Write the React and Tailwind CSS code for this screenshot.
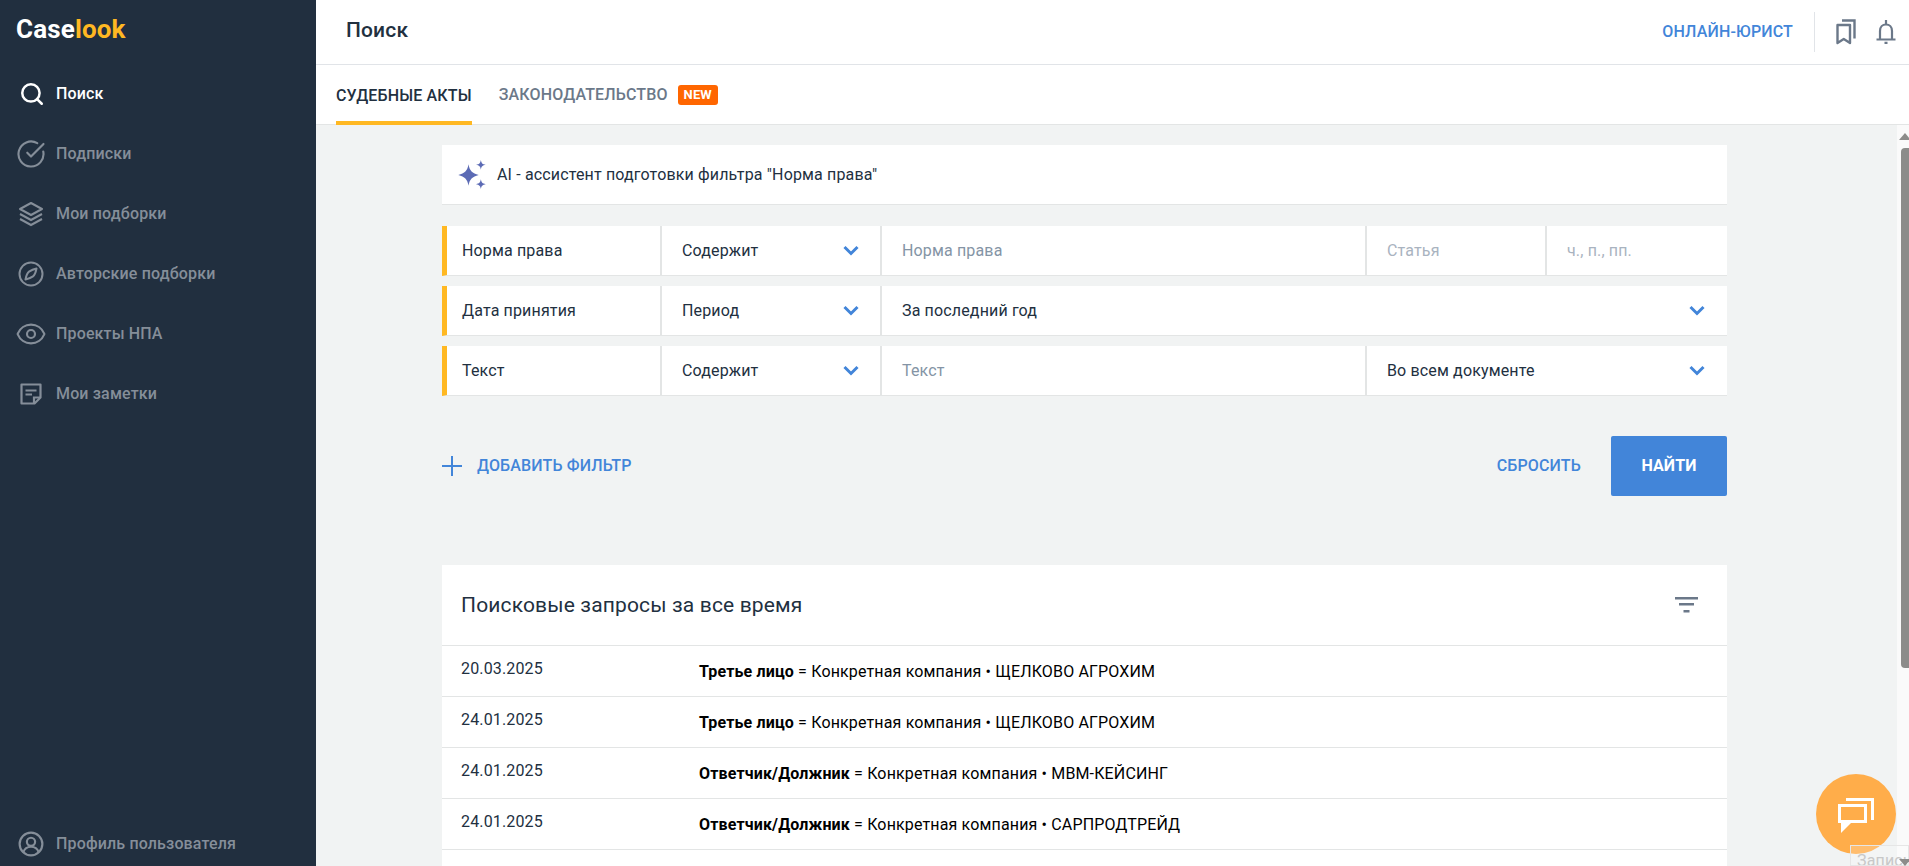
import { Search, CircleCheckBig, Eye } from 'lucide-react';

const navItems = [
    { label: 'Поиск', icon: 'search', active: true },
    { label: 'Подписки', icon: 'check' },
    { label: 'Мои подборки', icon: 'layers' },
    { label: 'Авторские подборки', icon: 'compass' },
    { label: 'Проекты НПА', icon: 'eye' },
    { label: 'Мои заметки', icon: 'note' },
];

const history = [
    { date: '20.03.2025', field: 'Третье лицо', value: 'ЩЕЛКОВО АГРОХИМ' },
    { date: '24.01.2025', field: 'Третье лицо', value: 'ЩЕЛКОВО АГРОХИМ' },
    { date: '24.01.2025', field: 'Ответчик/Должник', value: 'МВМ-КЕЙСИНГ' },
    { date: '24.01.2025', field: 'Ответчик/Должник', value: 'САРПРОДТРЕЙД' },
];

function NoteIcon() {
    return (
        <svg width="24" height="24" viewBox="0 0 24 24" fill="none" stroke="currentColor" strokeWidth="2.2">
            <path d="M2.500 2.500h19v13l-6 6h-13z" strokeLinejoin="round" />
            <path d="M6.500 8.500h11M6.500 12.500h6.500M15 21v-5.500h6" />
        </svg>
    );
}

function LayersIcon() {
    return (
        <svg width="26" height="26" viewBox="0 0 26 26" fill="none" stroke="currentColor" strokeWidth="2">
            <path d="M13 2l11 6-11 6-11-6z" strokeLinejoin="round" />
            <path d="M2 13l11 6 11-6M2 18l11 6 11-6" />
        </svg>
    );
}

function CompassIcon() {
    return (
        <svg width="26" height="26" viewBox="0 0 26 26" fill="none" stroke="currentColor" strokeWidth="2">
            <circle cx="13" cy="13" r="11.500" />
            <path d="M18.500 7.500c-.8 4-2 6.800-3.500 7.800s-4 2.400-7.500 3.200c.8-4 2-6.800 3.500-7.800s4-2.400 7.500-3.200z" strokeLinejoin="round" />
        </svg>
    );
}

function NavIcon({ name }) {
    if (name === 'search') return <Search size={26} strokeWidth={2.3} className="ml-[1px]" />;
    if (name === 'check') return <CircleCheckBig size={30} strokeWidth={1.7} />;
    if (name === 'layers') return <LayersIcon />;
    if (name === 'compass') return <CompassIcon />;
    if (name === 'eye') return <Eye size={32} strokeWidth={1.6} />;
    return <NoteIcon />;
}

function Chevron() {
    return (
        <svg width="16" height="11" viewBox="0 0 16 11" fill="none" stroke="#4285d9" strokeWidth="3">
            <path d="M1.500 2l6.500 6.500 6.500-6.500" />
        </svg>
    );
}

function Cell({ className, children, tone = 'text-[#22303f]', chevron }) {
    return (
        <div className={`flex items-center justify-between h-full bg-white pl-5 pr-[22px] ${tone} ${className}`}>
            <span>{children}</span>
            {chevron && <Chevron />}
        </div>
    );
}

function FilterRow({ children }) {
    return (
        <div className="flex h-[50px] border-b border-[#e3e5e5] text-base gap-[2px] bg-[#e3e5e5] border-l-[5px] border-l-[#ffb822]">
            {children}
        </div>
    );
}

export default function App() {
    return (
        <div className="flex h-screen overflow-hidden font-['Roboto',sans-serif] tracking-[0.15px] text-[#22303f] relative">
            <aside className="w-[316px] shrink-0 bg-[#212f3f] flex flex-col justify-between pb-[7px]">
                <div>
                    <div className="h-[64px] pl-4 pt-[12px] text-[26px] leading-[34px] font-bold text-white">
                        Case<span className="text-[#ffb822]">look</span>
                    </div>
                    <nav>
                        {navItems.map(item => (
                            <div key={item.label} className={`flex items-center h-[60px] text-base ${item.active ? 'text-white' : 'text-[#858e99]'}`}>
                                <div className="w-[56px] flex justify-center pl-[6px]"><NavIcon name={item.icon} /></div>
                                <span className="font-medium">{item.label}</span>
                            </div>
                        ))}
                    </nav>
                </div>
                <div className="flex items-center h-[30px] text-base text-[#858e99]">
                    <div className="w-[56px] flex justify-center pl-[6px]">
                        <svg width="26" height="26" viewBox="0 0 24 24" fill="none" stroke="currentColor" strokeWidth="2">
                            <circle cx="12" cy="12" r="10.500" />
                            <circle cx="12" cy="10" r="3.800" />
                            <path d="M5 19.500c1-3.200 3.700-5 7-5s6 1.800 7 5" />
                        </svg>
                    </div>
                    <span className="font-medium">Профиль пользователя</span>
                </div>
            </aside>

            <div className="flex-1 min-w-0 flex flex-col">
                <header className="h-[65px] shrink-0 bg-white border-b border-[#e1e4e8] flex items-center justify-between pl-[30px] pr-[13px]">
                    <h1 className="text-[21px] font-medium pb-[2px]">Поиск</h1>
                    <div className="flex items-center">
                        <span className="text-base font-medium text-[#4285d9]">ОНЛАЙН-ЮРИСТ</span>
                        <div className="w-px h-10 bg-[#e1e4e8] mx-[21px]" />
                        <svg width="20" height="26" viewBox="0 0 20 26" fill="none" stroke="#6b7889" strokeWidth="2.400">
                            <path d="M1.500 6h12.500v18l-6.250-4-6.250 4z" strokeLinejoin="round" />
                            <path d="M6 1.500h12.500v18" />
                        </svg>
                        <svg className="ml-[20px]" width="20" height="24" viewBox="0 0 19 24" fill="none" stroke="#6b7889" strokeWidth="2.200">
                            <path d="M0 19.500h19M3.500 19c0-1 0-5 0-8 0-4 2.500-6.500 6-6.500s6 2.500 6 6.500c0 3 0 7 0 8" />
                            <path d="M9.500 0v4M8 22.800h3" />
                        </svg>
                    </div>
                </header>
                <div className="h-[60px] shrink-0 bg-white border-b border-[#e3e5e5] flex items-stretch pl-[20px] text-base font-medium">
                    <div className="flex items-center border-b-[4px] border-[#ffb822] pt-[5px] -mb-px">СУДЕБНЫЕ АКТЫ</div>
                    <div className="flex items-center ml-[27px] text-[#6b7889] pt-[1px]">
                        ЗАКОНОДАТЕЛЬСТВО
                        <span className="ml-[10px] px-[6px] h-[20px] leading-[20px] rounded-[3px] bg-[#ff6600] text-white text-[13px] font-bold">NEW</span>
                    </div>
                </div>

                <div className="flex-1 min-h-0 flex">
                    <main className="flex-1 min-w-0 bg-[#f1f3f3] overflow-hidden pt-[20px] pl-[126px] pr-[170px]">
                        <div className="h-[60px] bg-white border-b border-[#e3e5e5] flex items-center pl-[16px] text-base">
                            <svg width="28" height="29" viewBox="2 1 25.500 27" fill="#5c6bb5">
                                <path d="M11.500 5c1 6 3.500 8.500 9.500 10-6 1.500-8.500 4-9.500 10-1-6-3.500-8.500-9.500-10 6-1.500 8.500-4 9.500-10z" />
                                <path d="M23 1c.5 3 1.500 4 4.500 4.500-3 .5-4 1.500-4.500 4.500-.5-3-1.500-4-4.500-4.500 3-.5 4-1.500 4.500-4.500z" />
                                <path d="M23 19c.5 3 1.500 4 4.500 4.500-3 .5-4 1.500-4.500 4.500-.5-3-1.500-4-4.500-4.500 3-.5 4-1.500 4.500-4.500z" />
                            </svg>
                            <span className="ml-[11px]">AI - ассистент подготовки фильтра "Норма права"</span>
                        </div>

                        <div className="mt-[21px] flex flex-col gap-[10px]">
                            <FilterRow>
                                <Cell className="w-[213px] shrink-0 !pl-[15px]">Норма права</Cell>
                                <Cell className="w-[218px] shrink-0 !pr-[21px]" chevron>Содержит</Cell>
                                <Cell className="flex-1" tone="text-[#8494a5]">Норма права</Cell>
                                <Cell className="w-[178px] shrink-0" tone="text-[#a9b3c0]">Статья</Cell>
                                <Cell className="w-[180px] shrink-0" tone="text-[#a9b3c0]">ч., п., пп.</Cell>
                            </FilterRow>
                            <FilterRow>
                                <Cell className="w-[213px] shrink-0 !pl-[15px]">Дата принятия</Cell>
                                <Cell className="w-[218px] shrink-0 !pr-[21px]" chevron>Период</Cell>
                                <Cell className="flex-1" chevron>За последний год</Cell>
                            </FilterRow>
                            <FilterRow>
                                <Cell className="w-[213px] shrink-0 !pl-[15px]">Текст</Cell>
                                <Cell className="w-[218px] shrink-0 !pr-[21px]" chevron>Содержит</Cell>
                                <Cell className="flex-1" tone="text-[#8494a5]">Текст</Cell>
                                <Cell className="w-[360px] shrink-0" chevron>Во всем документе</Cell>
                            </FilterRow>
                        </div>

                        <div className="mt-[40px] flex items-center justify-between text-base font-medium text-[#4285d9]">
                            <div className="flex items-center">
                                <svg width="22" height="22" viewBox="0 0 22 22" stroke="#4285d9" strokeWidth="2">
                                    <path d="M10 1v20M0 11h20" />
                                </svg>
                                <span className="ml-[13px]">ДОБАВИТЬ ФИЛЬТР</span>
                            </div>
                            <div className="flex items-center">
                                <span>СБРОСИТЬ</span>
                                <button className="ml-[30px] w-[116px] h-[60px] rounded-[2px] bg-[#4285d9] text-white font-bold">НАЙТИ</button>
                            </div>
                        </div>

                        <section className="mt-[69px] bg-white pb-[51px]">
                            <div className="h-[81px] border-b border-[#e3e5e5] flex items-center justify-between pl-[19px] pr-[29px]">
                                <h2 className="text-[21px] pt-[1px]">Поисковые запросы за все время</h2>
                                <svg width="23" height="16" viewBox="0 0 23 16" fill="#6b7889">
                                    <rect y="0" width="23" height="2.500" />
                                    <rect x="4" y="6" width="15" height="2.500" />
                                    <rect x="8.500" y="13" width="6" height="2.500" />
                                </svg>
                            </div>
                            {history.map((row, i) => (
                                <div key={i} className="h-[51px] border-b border-[#e3e5e5] flex text-base">
                                    <div className="w-[257px] pl-[19px] pt-[11px] shrink-0">{row.date}</div>
                                    <div className="pt-[14px] text-black">
                                        <b>{row.field}</b> = Конкретная компания • {row.value}
                                    </div>
                                </div>
                            ))}
                        </section>
                    </main>

                    <div className="w-[12px] shrink-0 bg-[#fafafa] flex flex-col items-end pt-[8px]">
                        <div className="w-[8px] flex justify-center">
                            <div className="shrink-0 border-x-[6px] border-x-transparent border-b-[7px] border-b-[#8c8c8a]" />
                        </div>
                        <div className="w-[8px] h-[520px] mt-[8px] bg-[#8c8c8a] rounded-l-[4px]" />
                        <div className="w-[8px] mt-auto flex justify-center relative z-10">
                            <div className="shrink-0 border-x-[6px] border-x-transparent border-t-[7px] border-t-[#8c8c8a]" />
                        </div>
                    </div>
                </div>
            </div>

            <div className="absolute left-[1816px] top-[774px] w-20 h-20 rounded-full bg-[#ffad4a] flex items-center justify-center">
                <svg width="36" height="36" viewBox="0 0 36 36" fill="none" stroke="#fff" strokeWidth="3" className="mt-[3px]">
                    <path d="M8 1.500h26.500v20.500" />
                    <rect x="1.500" y="7.500" width="26" height="16" />
                    <path fill="#fff" stroke="none" d="M3 25v10l10-10z" />
                </svg>
            </div>
            <div className="absolute left-[1850px] top-[845px] w-[59px] h-[21px] bg-white/20 border border-[#e6e6e6] pl-[6px] pt-[5px] leading-[20px] text-base text-[#c8c8c8] overflow-hidden whitespace-nowrap">
                Запись
            </div>
        </div>
    );
}
